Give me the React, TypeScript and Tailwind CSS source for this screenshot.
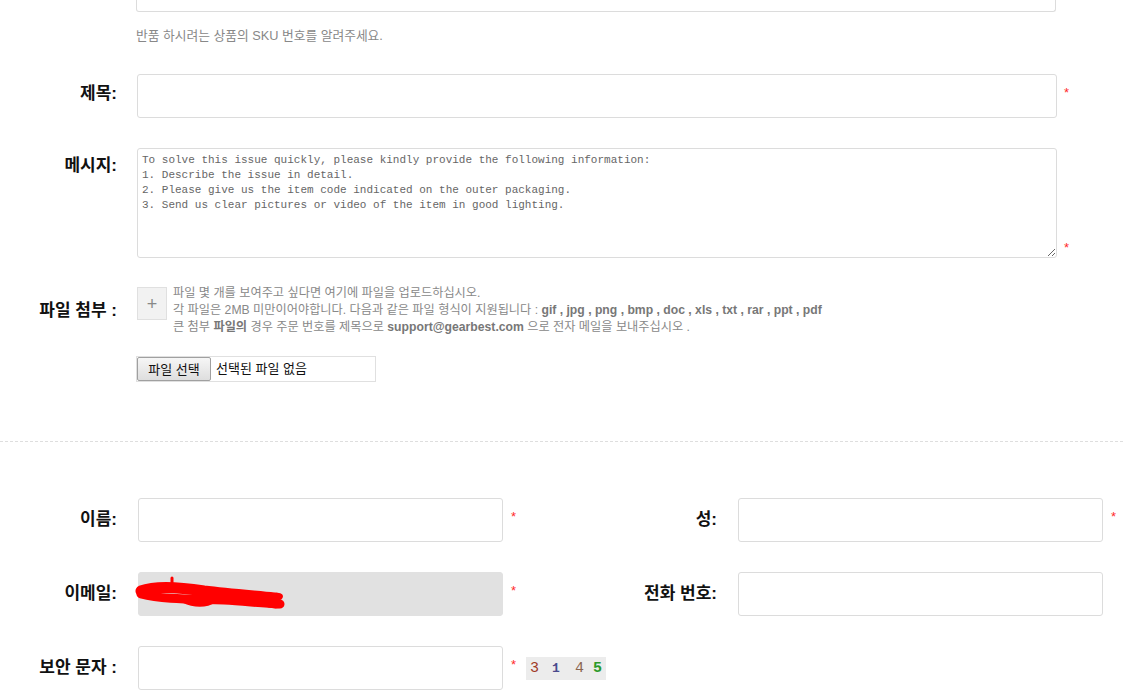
import React from 'react';

const FONT = "font-['Liberation_Sans','Noto_Sans_CJK_KR',sans-serif]";

const MESSAGE = `To solve this issue quickly, please kindly provide the following information:
1. Describe the issue in detail.
2. Please give us the item code indicated on the outer packaging.
3. Send us clear pictures or video of the item in good lighting.`;

function Star({ className = '' }: { className?: string }) {
    return <span className={`text-[13px] leading-none text-[#ff2a2a] ${className}`}>*</span>;
}

function Label({ children, className = '' }: { children: React.ReactNode; className?: string }) {
    return (
        <label className={`shrink-0 w-[117px] text-right text-[17px] leading-[20px] font-bold text-[#111] ${className}`}>
            {children}
        </label>
    );
}

// ─── redacted email scribble ───────────────────────────────────────────────
function Scribble() {
    return (
        <svg className="absolute left-[-5px] top-[3px] pointer-events-none" width="156" height="36" viewBox="0 0 156 36">
            <g fill="none" stroke="#ff0000" strokeLinecap="round" strokeLinejoin="round">
                <path d="M7 15 C 20 10, 45 11, 70 15 C 95 18, 120 20, 140 22" strokeWidth="11" />
                <path d="M7 18 C 30 24, 60 23, 90 24 C 110 25, 125 27, 146 28" strokeWidth="9" />
                <path d="M132 22 C 140 17, 150 18, 146 22 C 142 25, 135 24, 131 28 C 136 31, 145 31, 148 29" strokeWidth="4" />
                <path d="M38 2 L 38 12" strokeWidth="3" />
                <path d="M50 24 C 60 29, 72 29, 80 24" strokeWidth="6" />
            </g>
        </svg>
    );
}

function Captcha() {
    return (
        <div className="relative ml-[10px] w-[80px] h-[23px] bg-[#ececec] flex items-center font-['Liberation_Mono',monospace] text-[15px] leading-none">
            <span className="ml-[4px] text-[#a03a28]">3</span>
            <span className="ml-[13px] text-[#4a4a8c] font-bold text-[13px]">1</span>
            <span className="ml-[15px] text-[#8a6550]">4</span>
            <span className="ml-[9px] text-[#2a9a2a] font-bold">5</span>
        </div>
    );
}

export default function App() {
    return (
        <div className={`w-[1123px] h-[699px] overflow-hidden bg-white ${FONT}`}>

            {/* Upper form part */}
            <div className="ml-[136px] w-[920px] h-[12px] border border-t-0 border-[#dcdcdc] rounded-b-[3px]" />
            <p className="ml-[136px] mt-[17px] text-[12.75px] leading-[14px] text-[#888]">
                반품 하시려는 상품의 SKU 번호를 알려주세요.
            </p>

            {/* Subject */}
            <div className="mt-[31px] flex items-center">
                <Label className="w-[116px] -mt-[5px]">제목:</Label>
                <input className="ml-[20px] w-[920px] h-[44px] border border-[#dcdcdc] rounded-[3px] outline-none" />
                <Star className="ml-[7px] -mt-[8px]" />
            </div>

            {/* Message */}
            <div className="mt-[30px] flex items-start">
                <Label className="w-[116px] pt-[8px]">메시지:</Label>
                <textarea
                    readOnly
                    defaultValue={MESSAGE}
                    className="ml-[20px] w-[920px] h-[110px] border border-[#dcdcdc] rounded-[3px] px-[4px] pt-[4px] outline-none font-['Liberation_Mono',monospace] text-[11px] leading-[15px] text-[#666]"
                />
                <Star className="ml-[7px] self-end mb-[4px]" />
            </div>

            {/* Attachments */}
            <div className="mt-[29px] flex items-start">
                <Label className="w-[116px] pt-[14px]">파일 첨부 :</Label>
                <div className="ml-[20px] w-[30px] h-[33px] shrink-0 bg-[#f2f2f2] border border-[#e0e0e0] flex items-center justify-center text-[#888] text-[18px] leading-none">
                    +
                </div>
                <div className="ml-[6px] -mt-[2px] text-[12.2px] leading-[17px] text-[#888]">
                    <p>파일 몇 개를 보여주고 싶다면 여기에 파일을 업로드하십시오.</p>
                    <p>
                        각 파일은 2MB 미만이어야합니다. 다음과 같은 파일 형식이 지원됩니다 :{' '}
                        <b className="text-[#777]">gif , jpg , png , bmp , doc , xls , txt , rar , ppt , pdf</b>
                    </p>
                    <p>
                        큰 첨부 <b className="text-[#777]">파일의</b> 경우 주문 번호를 제목으로{' '}
                        <b className="text-[#777]">support@gearbest.com</b> 으로 전자 메일을 보내주십시오 .
                    </p>
                </div>
            </div>

            {/* File picker */}
            <div className="ml-[136px] mt-[20px] w-[240px] h-[26px] border border-[#e0e0e0] flex items-center">
                <button className="h-[24px] w-[74px] border border-[#a0a0a0] rounded-[2px] bg-gradient-to-b from-[#f6f6f6] to-[#dedede] text-[13px] text-[#111] leading-none">
                    파일 선택
                </button>
                <span className="ml-[5px] text-[13px] text-[#111]">선택된 파일 없음</span>
            </div>

            <div className="mt-[59px] border-t border-dashed border-[#dedede]" />

            {/* Contact info */}
            <div className="mt-[56px] flex flex-col gap-[30px]">
                <div className="flex items-center">
                    <div className="w-[600px] shrink-0 flex items-center">
                        <Label>이름:</Label>
                        <input className="ml-[21px] w-[365px] h-[44px] border border-[#dcdcdc] rounded-[3px] outline-none" />
                        <Star className="ml-[8px] -mt-[8px]" />
                    </div>
                    <div className="flex items-center">
                        <Label>성:</Label>
                        <input className="ml-[21px] w-[365px] h-[44px] border border-[#dcdcdc] rounded-[3px] outline-none" />
                        <Star className="ml-[8px] -mt-[8px]" />
                    </div>
                </div>

                <div className="flex items-center">
                    <div className="w-[600px] shrink-0 flex items-center">
                        <Label>이메일:</Label>
                        <div className="relative ml-[21px] w-[365px] h-[44px] bg-[#e1e1e1] border border-[#e1e1e1] rounded-[3px]">
                            <Scribble />
                        </div>
                        <Star className="ml-[8px] -mt-[8px]" />
                    </div>
                    <div className="flex items-center">
                        <Label>전화 번호:</Label>
                        <input className="ml-[21px] w-[365px] h-[44px] border border-[#dcdcdc] rounded-[3px] outline-none" />
                    </div>
                </div>

                <div className="flex items-center">
                    <Label>보안 문자 :</Label>
                    <input className="ml-[21px] w-[365px] h-[44px] border border-[#dcdcdc] rounded-[3px] outline-none" />
                    <Star className="ml-[8px] -mt-[8px]" />
                    <Captcha />
                </div>
            </div>
        </div>
    );
}
